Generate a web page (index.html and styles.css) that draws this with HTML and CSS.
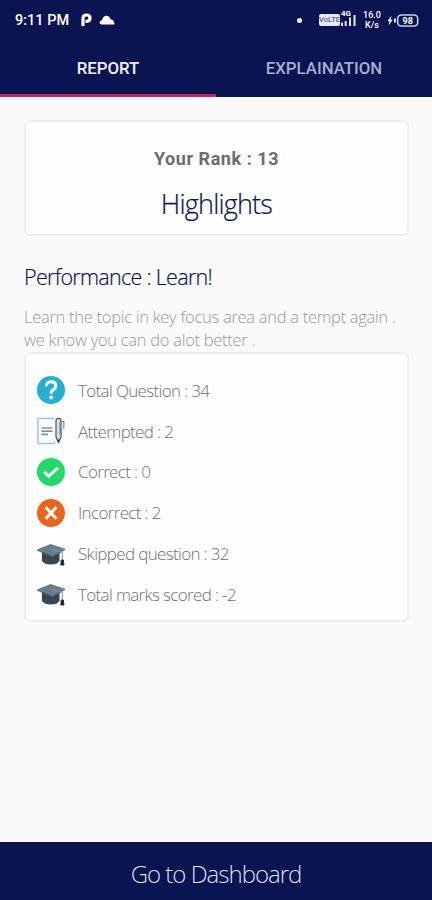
FILE: index.html
```html
<!DOCTYPE html>
<html lang="en">
<head>
  <meta charset="UTF-8">
  <meta name="viewport" content="width=device-width, initial-scale=1.0">
  <title>Report</title>
  <link rel="stylesheet" href="styles.css">
</head>

<body>
  <header class="header">
    <div class="status-bar">
      <span class="time">9:11 PM</span>
      <svg class="p-icon" width="11" height="14" viewBox="0 0 11 14">
        <path d="M2 13V5.500Q2 2 5.500 2Q9 2 9 5Q9 8.300 5.500 8.300H4.500" fill="none" stroke="#fff" stroke-width="3.200"/>
      </svg>
      <svg class="cloud-icon" width="16" height="10" viewBox="0 0 16 10">
        <path d="M3 9.500Q.5 9.300.5 7.500Q.6 5.600 3 5.200Q4 .7 7.500.7Q10.500.7 11.500 4.300Q15.500 5 15.500 9.500Z" fill="#fff"/>
      </svg>
      <span class="dot"></span>
      <span class="volte">VoLTE</span>
      <span class="signal">
        <span class="signal-type">4G</span>
        <svg width="15" height="12" viewBox="0 0 15 12">
          <path d="M1 12V8.500M4.700 12V7M9 12V3.500M13.500 12V1" stroke="#e4e6f4" stroke-width="2"/>
        </svg>
      </span>
      <span class="speed"><span>16.0</span><span>K/s</span></span>
      <svg class="battery" width="32" height="13" viewBox="0 0 32 13">
        <path d="M4.500 1.500L.5 7.200H2.500L1.500 11.500L5.700 5.800H3.600Z" fill="#fff"/>
        <path d="M8 4.500V8.500" stroke="#dfe2f2" stroke-width="2"/>
        <rect x="10.700" y="1" width="20" height="11" rx="3.500" fill="none" stroke="#c9cde6" stroke-width="1.600"/>
        <text x="20.700" y="10" class="battery-text">98</text>
      </svg>
    </div>
    <nav class="tabs">
      <a class="tab active">REPORT</a>
      <a class="tab">EXPLAINATION</a>
    </nav>
  </header>

  <main class="content">
    <section class="card rank-card">
      <p class="rank">Your Rank : 13</p>
      <h1 class="highlights">Highlights</h1>
    </section>

    <h2 class="performance">Performance : Learn!</h2>
    <p class="advice">Learn the topic in key focus area and a tempt again .<br>we know you can do alot better .</p>

    <ul class="card stats">
      <li class="stat">
        <svg class="icon" viewBox="0 0 28 28">
          <circle cx="14" cy="14" r="14" fill="#20b0d0"/>
          <path d="M9.300 10.300Q9.500 5.700 14 5.700Q18.800 5.700 18.800 9.700Q18.800 12.200 16.300 13.600Q14.200 15 14.200 17.700" fill="none" stroke="#fff" stroke-width="3"/>
          <circle cx="14.200" cy="21.500" r="1.900" fill="#fff"/>
        </svg>
        <span class="label">Total Question : 34</span>
      </li>
      <li class="stat">
        <svg class="icon" viewBox="0 0 28 28">
          <path d="M17.500 1.500H1V26.500H17.500V24" fill="#fbfdff" stroke="#8ecbea" stroke-width="1.500"/>
          <path d="M4.500 11H15.500M4.500 14.200H15.500M4.500 17.400H11" stroke="#8b8e94" stroke-width="1.700"/>
          <path d="M19 4Q19 1.300 21.500 1.300Q24 1.300 24 4V20L21.500 25.500L19 20Z" fill="#d8dde3" stroke="#5b5e66" stroke-width="1.300"/>
          <path d="M23.300 5V17" stroke="#4e8fc5" stroke-width="1.800"/>
          <path d="M24.500 4.500H26.800V12" fill="none" stroke="#757a82" stroke-width="1.100"/>
          <path d="M20.300 22.500L21.500 26.500L22.700 22.500Z" fill="#33363c"/>
        </svg>
        <span class="label">Attempted : 2</span>
      </li>
      <li class="stat">
        <svg class="icon" viewBox="0 0 28 28">
          <circle cx="14" cy="14" r="14" fill="#20d968"/>
          <path d="M7 13.800L11.800 18.200L21 9.700" fill="none" stroke="#fff" stroke-width="3"/>
        </svg>
        <span class="label">Correct : 0</span>
      </li>
      <li class="stat">
        <svg class="icon" viewBox="0 0 28 28">
          <circle cx="14" cy="14" r="14" fill="#e9651b"/>
          <path d="M8.700 8.300L19.300 19.700M19.300 8.300L8.700 19.700" stroke="#fff" stroke-width="3"/>
        </svg>
        <span class="label">Incorrect : 2</span>
      </li>
      <li class="stat">
        <svg class="icon" viewBox="0 0 28 28">
          <path d="M5 12H22.500V21Q20 24.500 14 24.500Q7.500 24.500 5 21Z" fill="#354753"/>
          <path d="M0 9.500L13.500 4L28 8.800L15.500 16.500Z" fill="#647e8b"/>
          <path d="M0 9.500L15.500 16.500L28 8.800V9.800L15.500 17.700L0 10.500Z" fill="#465863"/>
          <path d="M14 9.500L25.300 12.300V20" fill="none" stroke="#7f939c" stroke-width="1"/>
          <path d="M24.300 20H26.300L27 25H23.800Z" fill="#25282e" stroke="#25282e"/>
        </svg>
        <span class="label">Skipped question : 32</span>
      </li>
      <li class="stat">
        <svg class="icon" viewBox="0 0 28 28">
          <path d="M5 12H22.500V21Q20 24.500 14 24.500Q7.500 24.500 5 21Z" fill="#354753"/>
          <path d="M0 9.500L13.500 4L28 8.800L15.500 16.500Z" fill="#647e8b"/>
          <path d="M0 9.500L15.500 16.500L28 8.800V9.800L15.500 17.700L0 10.500Z" fill="#465863"/>
          <path d="M14 9.500L25.300 12.300V20" fill="none" stroke="#7f939c" stroke-width="1"/>
          <path d="M24.300 20H26.300L27 25H23.800Z" fill="#25282e" stroke="#25282e"/>
        </svg>
        <span class="label">Total marks scored : -2</span>
      </li>
    </ul>
  </main>

  <button class="dashboard-btn">Go to Dashboard</button>
</body>
</html>
```
FILE: styles.css
```css
*, *::before, *::after {
  box-sizing: border-box;
}

:root {
  --navy: #0a1450;
  --light: "Open Sans", "Noto Sans", sans-serif;
}

body {
  margin: 0;
  height: 100vh;
  display: flex;
  flex-direction: column;
  background-color: #fafafa;
  font-family: var(--light);
}

h1, h2, p, ul {
  margin: 0;
  padding: 0;
}

/* header */
.header {
  background-color: var(--navy);
  color: white;
  font-family: Roboto, sans-serif;
}

.status-bar {
  display: flex;
  align-items: center;
  height: 40px;
  padding: 0 13px 0 15px;
}

.time {
  font-size: 14.5px;
  font-weight: 500;
  width: 66px;
  white-space: nowrap;
}

.cloud-icon {
  margin-left: 7px;
}

.dot {
  width: 5px;
  height: 5px;
  margin-left: auto;
  border-radius: 50%;
  background-color: white;
}

.volte {
  width: 21px;
  height: 12px;
  margin-left: 17px;
  border-radius: 2px;
  background-color: #e6e8f3;
  color: #59608f;
  font-size: 7.5px;
  font-weight: 500;
  line-height: 12px;
  text-align: center;
}

.signal {
  position: relative;
  display: flex;
  margin-left: 1px;
}

.signal-type {
  position: absolute;
  top: -4px;
  left: 0;
  font-size: 8px;
  font-weight: bold;
  line-height: 8px;
}

.speed {
  display: flex;
  flex-direction: column;
  gap: 1px;
  width: 20px;
  margin-left: 6px;
  font-size: 9px;
  font-weight: 500;
  line-height: 9px;
  text-align: center;
}

.speed span {
  height: 9px;
  overflow: hidden;
}

.battery {
  margin-left: 5px;
}

.battery-text {
  fill: white;
  font-size: 9px;
  font-weight: bold;
  text-anchor: middle;
}

.tabs {
  display: flex;
  height: 57px;
}

.tab {
  flex: 1;
  padding-top: 3px;
  border-bottom: 3px solid transparent;
  color: #a9aece;
  font-size: 16.8px;
  font-weight: 500;
  line-height: 51px;
  text-align: center;
}

.tab.active {
  border-color: #c9205f;
  color: #f0f1f8;
}

/* content */
.content {
  flex: 1;
  padding: 23px 23px 0 24px;
}

.card {
  border: 2px solid #eee;
  border-radius: 6px;
  background-color: #fefefe;
}

.rank-card {
  height: 116px;
  padding-top: 25px;
  text-align: center;
}

.rank {
  color: #6c6c6c;
  font-family: Roboto, sans-serif;
  font-size: 18px;
  font-weight: bold;
  letter-spacing: 0.55px;
  line-height: 24px;
}

.highlights {
  margin-top: 15px;
  color: var(--navy);
  font-size: 27px;
  font-weight: 300;
  letter-spacing: -0.8px;
  line-height: 36px;
  -webkit-text-stroke: 0.2px var(--navy);
}

.performance {
  margin-top: 25px;
  color: var(--navy);
  font-size: 21.5px;
  font-weight: 300;
  letter-spacing: -0.7px;
  line-height: 32px;
  -webkit-text-stroke: 0.2px var(--navy);
}

.advice {
  margin-top: 13px;
  margin-bottom: 1px;
  color: #999;
  font-size: 16.5px;
  font-weight: 300;
  letter-spacing: -0.28px;
  line-height: 22.5px;
  white-space: nowrap;
}

.stats {
  height: 270px;
  padding: 16px 11px;
  list-style: none;
}

.stat {
  display: flex;
  align-items: center;
  gap: 13px;
  height: 40.8px;
}

.icon {
  width: 28px;
  height: 28px;
}

.label {
  color: #707070;
  font-size: 17px;
  font-weight: 300;
  letter-spacing: -0.66px;
  white-space: nowrap;
}

.dashboard-btn {
  height: 58px;
  padding: 5px 0 0;
  border: none;
  background-color: var(--navy);
  color: #dcdfee;
  font-family: var(--light);
  font-size: 24px;
  font-weight: 300;
  letter-spacing: -1px;
}
```
